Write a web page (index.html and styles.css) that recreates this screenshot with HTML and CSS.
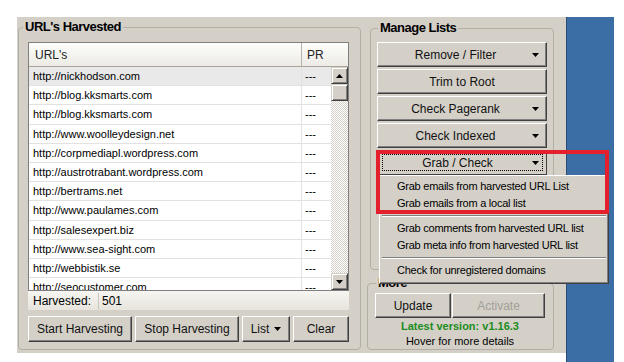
FILE: index.html
```html
<!DOCTYPE html>
<html>
<head>
<meta charset="utf-8">
<title>URL Harvester</title>
<link rel="stylesheet" href="styles.css">
</head>
<body>
<div class="screen">
  <div class="window">
    <fieldset class="group harvest">
      <legend>URL's Harvested</legend>
      <div class="list">
        <div class="list-head">
          <div class="head-url">URL's</div>
          <div class="head-pr">PR</div>
        </div>
        <div class="list-body">
          <div class="rows">
            <div class="row selected"><span class="cell-url">http://nickhodson.com</span><span class="cell-pr">---</span></div>
            <div class="row"><span class="cell-url">http://blog.kksmarts.com</span><span class="cell-pr">---</span></div>
            <div class="row"><span class="cell-url">http://blog.kksmarts.com</span><span class="cell-pr">---</span></div>
            <div class="row"><span class="cell-url">http://www.woolleydesign.net</span><span class="cell-pr">---</span></div>
            <div class="row"><span class="cell-url">http://corpmediapl.wordpress.com</span><span class="cell-pr">---</span></div>
            <div class="row"><span class="cell-url">http://austrotrabant.wordpress.com</span><span class="cell-pr">---</span></div>
            <div class="row"><span class="cell-url">http://bertrams.net</span><span class="cell-pr">---</span></div>
            <div class="row"><span class="cell-url">http://www.paulames.com</span><span class="cell-pr">---</span></div>
            <div class="row"><span class="cell-url">http://salesexpert.biz</span><span class="cell-pr">---</span></div>
            <div class="row"><span class="cell-url">http://www.sea-sight.com</span><span class="cell-pr">---</span></div>
            <div class="row"><span class="cell-url">http://webbistik.se</span><span class="cell-pr">---</span></div>
            <div class="row"><span class="cell-url">http://seocustomer.com</span><span class="cell-pr">---</span></div>
          </div>
          <div class="scrollbar">
            <div class="sb-btn"><svg width="7" height="4" viewBox="0 0 7 4"><path d="M3.5 0L7 4H0z" fill="#000"/></svg></div>
            <div class="sb-thumb"></div>
            <div class="sb-track"></div>
            <div class="sb-btn"><svg width="7" height="4" viewBox="0 0 7 4"><path d="M0 0h7L3.5 4z" fill="#000"/></svg></div>
          </div>
        </div>
      </div>
      <div class="status">
        <span class="status-label">Harvested:</span>
        <span class="status-value">501</span>
      </div>
      <div class="actions">
        <button class="btn w-start">Start Harvesting</button>
        <button class="btn w-stop">Stop Harvesting</button>
        <button class="btn w-list"><span>List</span><svg class="caret-sm" width="7" height="4" viewBox="0 0 7 4"><path d="M0 0h7L3.5 4z" fill="#000"/></svg></button>
        <button class="btn w-clear">Clear</button>
      </div>
    </fieldset>

    <div class="side">
      <fieldset class="group manage">
        <legend>Manage Lists</legend>
        <div class="stack">
          <button class="btn drop"><span class="label">Remove / Filter</span><svg class="caret" width="7" height="4" viewBox="0 0 7 4"><path d="M0 0h7L3.5 4z" fill="#000"/></svg></button>
          <button class="btn">Trim to Root</button>
          <button class="btn drop"><span class="label">Check Pagerank</span><svg class="caret" width="7" height="4" viewBox="0 0 7 4"><path d="M0 0h7L3.5 4z" fill="#000"/></svg></button>
          <button class="btn drop"><span class="label">Check Indexed</span><svg class="caret" width="7" height="4" viewBox="0 0 7 4"><path d="M0 0h7L3.5 4z" fill="#000"/></svg></button>
          <button class="btn pressed"><span class="focus"><span class="label">Grab / Check</span><svg class="caret" width="7" height="4" viewBox="0 0 7 4"><path d="M0 0h7L3.5 4z" fill="#000"/></svg></span></button>
        </div>
      </fieldset>
      <fieldset class="group more">
        <legend>More</legend>
        <div class="more-buttons">
          <button class="btn w-update">Update</button>
          <button class="btn w-activate" disabled>Activate</button>
        </div>
        <div class="version">Latest version: v1.16.3</div>
        <div class="hover">Hover for more details</div>
      </fieldset>
    </div>

    <div class="menu">
      <div class="menu-item">Grab emails from harvested URL List</div>
      <div class="menu-item">Grab emails from a local list</div>
      <div class="menu-sep"></div>
      <div class="menu-item">Grab comments from harvested URL list</div>
      <div class="menu-item">Grab meta info from harvested URL list</div>
      <div class="menu-sep"></div>
      <div class="menu-item">Check for unregistered domains</div>
    </div>
    <div class="highlight"></div>
  </div>
  <div class="desktop"></div>
</div>
</body>
</html>
```

FILE: styles.css
```css
* { box-sizing: border-box; }

html, body {
  margin: 0;
  padding: 0;
  background: #fff;
}

body {
  font-family: "Liberation Sans", Arial, sans-serif;
  font-size: 12px;
  color: #000;
}

.screen {
  display: flex;
  align-items: flex-start;
  padding-top: 17px;
}

.window {
  position: relative;
  margin-left: 17px;
  width: 549px;
  height: 336px;
  background: #d4d0c8;
  display: flex;
  align-items: flex-start;
}

.desktop {
  width: 48px;
  height: 345px;
  background: #3a6ea5;
  border-left: 1px solid #2a4d77;
}

/* group boxes */
.group {
  margin: 0;
  border: 1px solid #b2afa5;
  border-radius: 4px;
  min-width: 0;
}

.group legend {
  font-weight: bold;
  font-size: 13px;
  letter-spacing: -0.5px;
  line-height: 14px;
  padding: 0 2px;
}

.harvest {
  margin: 3px 0 0 1px;
  width: 343px;
  padding: 8px 11px 7px 9px;
}

.harvest legend { margin-left: -5px; }

/* list view */
.list {
  border: 1px solid #7f7f7f;
  background: #fff;
}

.list-head {
  display: flex;
  height: 24px;
  background: linear-gradient(#fdfdfb, #ecebe5);
  border-bottom: 1px solid #a9a699;
  font-size: 12px;
  color: #222;
}

.head-url {
  width: 273px;
  padding-left: 6px;
  border-right: 1px solid #b7b4a8;
  display: flex;
  align-items: center;
}

.head-pr {
  flex: 1;
  padding-left: 5px;
  display: flex;
  align-items: center;
}

.list-body {
  display: flex;
  height: 223px;
  overflow: hidden;
}

.rows {
  flex: 1;
  min-width: 0;
}

.row {
  display: flex;
  height: 19.2px;
  border-bottom: 1px solid #e2e2e2;
  font-size: 11px;
}

.row.selected { background: #e9e9e9; }

.cell-url {
  width: 273px;
  padding-left: 4px;
  border-right: 1px solid #e2e2e2;
  display: flex;
  align-items: center;
  white-space: nowrap;
}

.cell-pr {
  flex: 1;
  padding-left: 3px;
  display: flex;
  align-items: center;
}

.scrollbar {
  width: 17px;
  display: flex;
  flex-direction: column;
}

.sb-btn, .sb-thumb {
  height: 17px;
  flex: none;
  background: #d4d0c8;
  border: 1px solid;
  border-color: #d4d0c8 #404040 #404040 #d4d0c8;
  box-shadow: inset 1px 1px #fff, inset -1px -1px #808080;
  display: flex;
  align-items: center;
  justify-content: center;
}

.sb-track {
  flex: 1;
  background: repeating-conic-gradient(#fff 0 25%, #d4d0c8 0 50%) 0 0 / 2px 2px;
}

/* status bar */
.status {
  display: flex;
  height: 19px;
  background: linear-gradient(#f6f5f1, #e6e4dc);
  align-items: center;
}

.status-label {
  width: 71px;
  padding-left: 5px;
  border-right: 1px solid #c9c6bb;
  line-height: 16px;
}

.status-value { padding-left: 3px; }

/* buttons */
.btn {
  font-family: "Liberation Sans", Arial, sans-serif;
  font-size: 12px;
  color: #111;
  height: 25px;
  margin: 0;
  padding: 0;
  background: #d4d0c8;
  border: 1px solid;
  border-color: #fff #404040 #404040 #fff;
  box-shadow: inset -1px -1px #808080;
  display: flex;
  align-items: center;
  justify-content: center;
}

.actions {
  display: flex;
  gap: 3px;
  margin-top: 6px;
}

.actions .btn { height: 26px; }
.w-start { width: 104px; }
.w-stop { width: 104px; }
.w-list { width: 48px; gap: 5px; }
.w-clear { flex: 1; }

.side {
  margin-left: 6px;
  width: 187px;
  display: flex;
  flex-direction: column;
}

.manage {
  margin: 4px 0 0 3px;
  width: 184px;
  height: 249px;
  padding: 7px 6px 0 6px;
}

.manage legend { margin-left: 1px; }

.stack {
  display: flex;
  flex-direction: column;
  gap: 2px;
}

.drop .label {
  flex: 1;
  text-align: center;
  padding-left: 1px;
}

.caret { margin-right: 7px; flex: none; }

.pressed {
  border-color: #404040;
  box-shadow: inset 1px 1px #808080;
  padding: 3px 3px 3px 4px;
}

.pressed .focus {
  flex: 1;
  align-self: stretch;
  display: flex;
  align-items: center;
  border: 1px dotted #000;
}

.pressed .label {
  flex: 1;
  text-align: center;
  padding-top: 1px;
}

.pressed .caret { margin-right: 3px; margin-top: 1px; }

.more {
  margin: 6px 0 0 0;
  width: 187px;
  height: 74px;
  padding: 3px 8px 0 7px;
}

.more legend { margin-left: 1px; }

.more-buttons {
  display: flex;
  gap: 1px;
}

.w-update { width: 76px; }
.w-activate { flex: 1; color: #a19f98; }

.version {
  margin-top: 1px;
  text-align: center;
  font-size: 11px;
  font-weight: bold;
  line-height: 15px;
  color: #1c8c1c;
}

.hover {
  text-align: center;
  font-size: 11px;
  line-height: 15px;
}

/* dropdown menu */
.menu {
  position: absolute;
  left: 362px;
  top: 158px;
  width: 230px;
  padding: 2px 0 4px;
  background: #d4d0c8;
  border: 1px solid;
  border-color: #fff #404040 #404040 #fff;
  box-shadow: inset -1px -1px #808080;
  font-size: 11px;
  letter-spacing: -0.25px;
}

.menu-item {
  height: 17px;
  line-height: 17px;
  padding-left: 17px;
  white-space: nowrap;
}

.menu-sep {
  height: 8px;
  margin: 0 2px;
  background: linear-gradient(transparent 3px, #808080 3px, #808080 4px, #fff 4px, #fff 5px, transparent 5px);
}

.highlight {
  position: absolute;
  left: 359px;
  top: 133px;
  width: 233px;
  height: 64px;
  border: 4px solid #e3202b;
}
```
